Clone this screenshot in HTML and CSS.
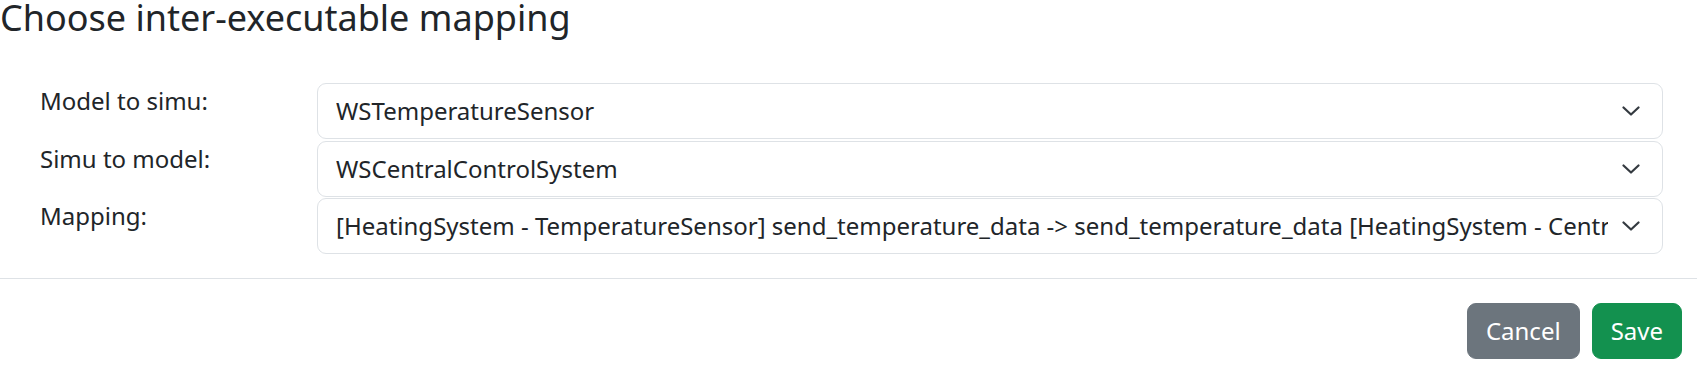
FILE: index.html
```html
<!DOCTYPE html>
<html lang="en">
<head>
<meta charset="utf-8">
<title>Choose inter-executable mapping</title>
<link rel="stylesheet" href="styles.css">
</head>
<body>
<div class="dialog">
  <h1 class="dialog-title">Choose inter-executable mapping</h1>
  <div class="dialog-body">
    <div class="field-row">
      <label class="field-label">Model to simu:</label>
      <div class="select-box">
        <span class="select-value">WSTemperatureSensor</span>
        <svg class="chevron" width="18" height="10" viewBox="0 0 18 10"><polyline points="1.5,1.5 9,8.5 16.5,1.5" fill="none" stroke="#343a40" stroke-width="2.2" stroke-linecap="round" stroke-linejoin="round"/></svg>
      </div>
    </div>
    <div class="field-row">
      <label class="field-label">Simu to model:</label>
      <div class="select-box">
        <span class="select-value">WSCentralControlSystem</span>
        <svg class="chevron" width="18" height="10" viewBox="0 0 18 10"><polyline points="1.5,1.5 9,8.5 16.5,1.5" fill="none" stroke="#343a40" stroke-width="2.2" stroke-linecap="round" stroke-linejoin="round"/></svg>
      </div>
    </div>
    <div class="field-row">
      <label class="field-label">Mapping:</label>
      <div class="select-box">
        <span class="select-value">[HeatingSystem - TemperatureSensor] send_temperature_data -&gt; send_temperature_data [HeatingSystem - CentralControlSystem]</span>
        <svg class="chevron" width="18" height="10" viewBox="0 0 18 10"><polyline points="1.5,1.5 9,8.5 16.5,1.5" fill="none" stroke="#343a40" stroke-width="2.2" stroke-linecap="round" stroke-linejoin="round"/></svg>
      </div>
    </div>
  </div>
  <div class="dialog-footer">
    <button class="btn btn-secondary" type="button">Cancel</button>
    <button class="btn btn-success" type="button">Save</button>
  </div>
</div>
</body>
</html>
```
FILE: styles.css
```css
html, body {
  margin: 0;
  padding: 0;
  background: #ffffff;
}

body {
  font-family: "Noto Sans", "Open Sans", sans-serif;
  color: #212529;
  font-size: 24px;
  line-height: 1.5;
}

.dialog-title {
  margin: 0;
  padding-bottom: 8px;
  font-size: 36px;
  font-weight: 400;
  line-height: 36px;
}

.dialog-body {
  margin-top: 39px;
  padding: 0 34px 0 40px;
  display: flex;
  flex-direction: column;
  gap: 1.5px;
}

.field-row {
  display: grid;
  grid-template-columns: 277px 1fr;
  align-items: start;
}

.field-label {
  display: block;
  line-height: 36px;
}

.select-box {
  display: flex;
  align-items: center;
  height: 56px;
  box-sizing: border-box;
  border: 1px solid #dee2e6;
  border-radius: 9px;
  padding: 0 22px 0 18px;
  background: #fff;
  min-width: 0;
}

.select-value {
  flex: 1;
  min-width: 0;
  overflow: hidden;
  white-space: nowrap;
  margin-right: 14px;
}

.chevron {
  flex: none;
  display: block;
}

.dialog-footer {
  margin-top: 24px;
  border-top: 1px solid #dee2e6;
  display: flex;
  justify-content: flex-end;
  gap: 12px;
  padding: 24px 15px 0 0;
}

.btn {
  font-family: inherit;
  font-size: 24px;
  line-height: 36px;
  padding: 9px 18px;
  border: 1px solid transparent;
  border-radius: 9px;
  color: #fff;
  cursor: pointer;
}

.btn-secondary {
  background: #6c757d;
  border-color: #6c757d;
}

.btn-success {
  background: #13914f;
  border-color: #13914f;
}
```
